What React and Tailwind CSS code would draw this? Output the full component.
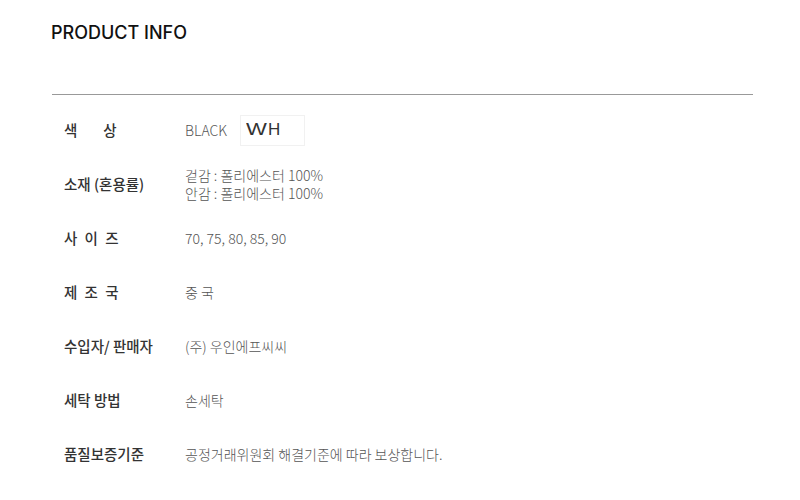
const rows = [
  {
    label: (
      <span className="flex gap-[26px]">
        <span>색</span>
        <span>상</span>
      </span>
    ),
    value: (
      <div className="flex items-center">
        <span>BLACK</span>
        <span className="ml-[13px] flex h-[31px] w-[65px] items-center border border-[#f1f1f1] pl-[5px] font-['Liberation_Sans',sans-serif] text-[17px] text-[#333]">
          <span className="inline-block origin-left scale-x-[1.3]">W</span>
          <span className="ml-[6px]">H</span>
        </span>
      </div>
    ),
  },
  {
    label: "소재 (혼용률)",
    value: (
      <div className="flex flex-col gap-[1px] leading-[17px]">
        <div>겉감 : 폴리에스터 100%</div>
        <div>안감 : 폴리에스터 100%</div>
      </div>
    ),
  },
  { label: <span className="tracking-[2px]">사 이 즈</span>, value: "70, 75, 80, 85, 90" },
  { label: <span className="tracking-[2px]">제 조 국</span>, value: "중 국" },
  { label: "수입자/ 판매자", value: "(주) 우인에프씨씨" },
  { label: "세탁 방법", value: "손세탁" },
  { label: "품질보증기준", value: "공정거래위원회 해결기준에 따라 보상합니다." },
];

function InfoRow({ label, value }) {
  return (
    <div className="flex h-[54px] items-center">
      <div className="w-[133px] pl-[12px] text-[14.5px] font-medium text-[#333]">{label}</div>
      <div className="text-[14px] font-light text-[#555]">{value}</div>
    </div>
  );
}

export default function App() {
  return (
    <div className="h-[500px] w-[800px] bg-white font-['Noto_Sans_CJK_KR',sans-serif]">
      <div className="ml-[52px] w-[701px] pt-[20px]">
        <h2 className="ml-[-1px] font-['Inter','Noto_Sans_CJK_KR',sans-serif] text-[18px] font-medium leading-[26px] text-[#111]">
          PRODUCT INFO
        </h2>
        <div className="mt-[48px] border-t border-[#999]" />
        <div className="mt-[8px]">
          {rows.map((row, i) => (
            <InfoRow key={i} label={row.label} value={row.value} />
          ))}
        </div>
      </div>
    </div>
  );
}
